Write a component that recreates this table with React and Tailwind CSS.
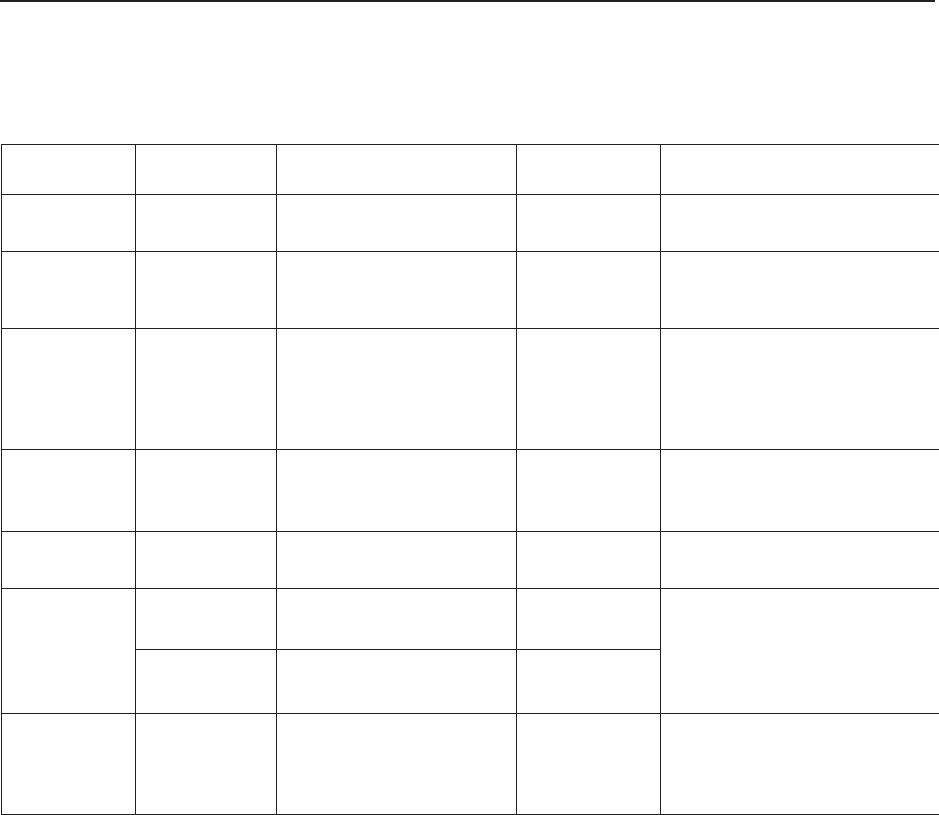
import React from 'react';

const cols = [134, 141, 240, 144, 279];
const line = 'border border-[#231f20]';

export default function App() {
  return (
    <div className="w-[939px] h-[815px] bg-white overflow-hidden font-['Liberation_Sans',sans-serif]">
      {/* rule across the top */}
      <div className="h-[2px] w-[935px] bg-[#231f20]" />

      <table className="mt-[142px] ml-px table-fixed border-collapse w-[938px] border-r-2 border-[#231f20]">
        <colgroup>
          {cols.map((w, i) => (
            <col key={i} style={{ width: w }} />
          ))}
        </colgroup>
        <tbody>
          <tr className="h-[50px]">
            <td className={line} /><td className={line} /><td className={line} /><td className={line} /><td className={`${line} border-r-2`} />
          </tr>
          <tr className="h-[57px]">
            <td className={line} /><td className={line} /><td className={line} /><td className={line} /><td className={`${line} border-r-2`} />
          </tr>
          <tr className="h-[77px]">
            <td className={line} /><td className={line} /><td className={line} /><td className={line} /><td className={`${line} border-r-2`} />
          </tr>
          <tr className="h-[121px]">
            <td className={line} /><td className={line} /><td className={line} /><td className={line} /><td className={`${line} border-r-2`} />
          </tr>
          <tr className="h-[82px]">
            <td className={line} /><td className={line} /><td className={line} /><td className={line} /><td className={`${line} border-r-2`} />
          </tr>
          <tr className="h-[57px]">
            <td className={line} /><td className={line} /><td className={line} /><td className={line} /><td className={line} />
          </tr>
          <tr className="h-[61px]">
            <td rowSpan={2} className={line} /><td className={line} /><td className={line} /><td className={line} /><td rowSpan={2} className={`${line} border-r-2`} />
          </tr>
          <tr className="h-[64px]">
            <td className={line} /><td className={line} /><td className={line} />
          </tr>
          <tr className="h-[101px]">
            <td className={line} /><td className={line} /><td className={line} /><td className={line} /><td className={`${line} border-r-2`} />
          </tr>
        </tbody>
      </table>
    </div>
  );
}
